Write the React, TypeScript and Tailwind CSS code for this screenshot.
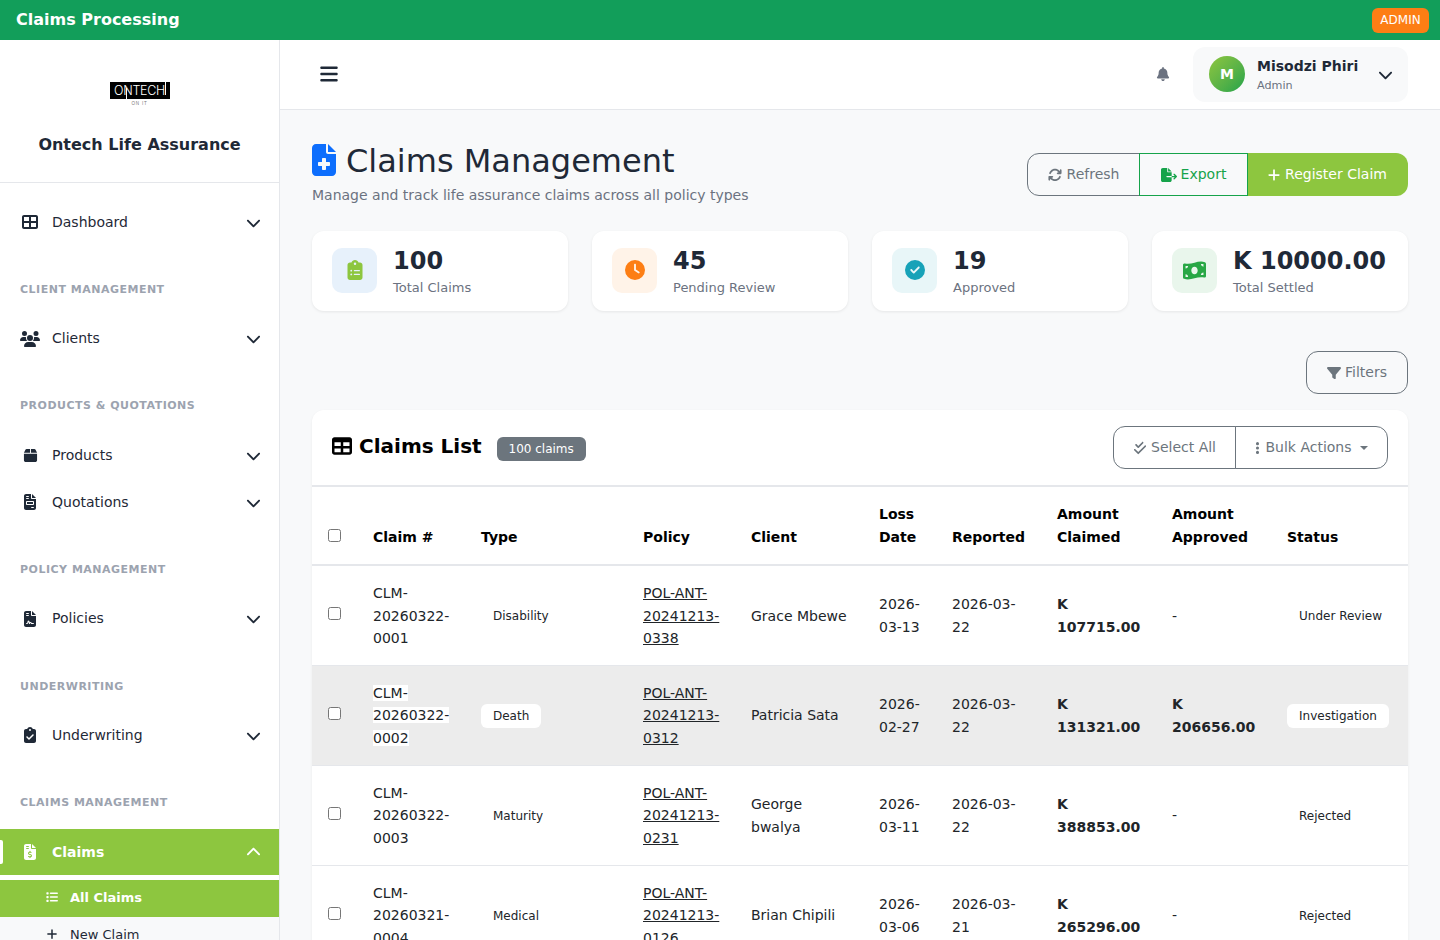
import React from 'react';
import {
  FaArrowsRotate, FaBars, FaBell, FaBox, FaCheckDouble, FaChevronDown, FaChevronUp, FaCircleCheck,
  FaClipboardCheck, FaClipboardList, FaClock, FaEllipsisVertical, FaFileContract, FaFileExport,
  FaFileInvoice, FaFileInvoiceDollar, FaFileMedical, FaFilter, FaList, FaMoneyBillWave, FaPlus,
  FaTable, FaTableCellsLarge, FaUsers,
} from 'react-icons/fa6';

const NavItem = ({ icon, label }: { icon: React.ReactNode; label: string }) => (
  <div className="flex h-[46px] items-center pl-5 pr-[18px] text-[14px] text-[#1f2937]">
    <span className="flex w-5 justify-center text-[#1f2937]">{icon}</span>
    <span className="ml-3 flex-1">{label}</span>
    <FaChevronDown size={15} className="text-[#1f2937]" />
  </div>
);

const SectionTitle = ({ children }: { children: React.ReactNode }) => (
  <div className="mb-[16.6px] mt-[36px] flex h-[18px] items-center px-5 text-[11px] font-bold uppercase tracking-[0.5px] text-[#9ca3af]">
    {children}
  </div>
);

const Sidebar = () => (
  <aside className="h-full w-[280px] shrink-0 border-r border-[#e5e7eb] bg-white">
    <div className="flex h-[143px] flex-col items-center border-b border-[#e5e7eb] pt-[42px]">
      <div className="relative flex h-[17px] w-[60px] items-center justify-center bg-black pt-[2px] font-['Inter'] text-[12.5px] font-light tracking-[-0.3px] text-white">
        ONTECH
        <span className="absolute left-[16px] top-[6px] h-[11px] w-px bg-white" />
        <span className="absolute left-[55px] top-0 h-[13px] w-px bg-white" />
      </div>
      <div className="mt-[2px] h-[6px] font-['Liberation_Sans'] text-[4.5px] leading-[6px] tracking-[0.8px] text-[#777777]">ON IT</div>
      <div className="mt-[26px] text-[16px] font-bold leading-[24px] text-[#1f2937]">Ontech Life Assurance</div>
    </div>
    <nav className="pt-4">
      <NavItem icon={<FaTableCellsLarge size={16} />} label="Dashboard" />
      <SectionTitle>Client Management</SectionTitle>
      <NavItem icon={<FaUsers size={20} />} label="Clients" />
      <SectionTitle>Products &amp; Quotations</SectionTitle>
      <div className="flex flex-col gap-[1px]">
        <NavItem icon={<FaBox size={15} />} label="Products" />
        <NavItem icon={<FaFileInvoice size={16} />} label="Quotations" />
      </div>
      <SectionTitle>Policy Management</SectionTitle>
      <NavItem icon={<FaFileContract size={16} />} label="Policies" />
      <SectionTitle>Underwriting</SectionTitle>
      <NavItem icon={<FaClipboardCheck size={16} />} label="Underwriting" />
      <SectionTitle>Claims Management</SectionTitle>
      <div className="relative flex h-[46px] items-center bg-[#8dc63f] pl-5 pr-[18px] pt-px text-[14px] font-bold text-white">
        <span className="absolute left-0 top-[11px] h-[24px] w-[3px] rounded-r-[2px] bg-white" />
        <span className="flex w-5 justify-center"><FaFileInvoiceDollar size={16} /></span>
        <span className="ml-3 flex-1">Claims</span>
        <FaChevronUp size={15} />
      </div>
      <div className="mt-[5px] bg-[#f8f9fa]">
        <div className="flex h-[37px] items-center bg-[#8dc63f] pb-[2px] pl-[46px] text-[13px] font-bold text-white">
          <FaList size={12} />
          <span className="ml-3">All Claims</span>
        </div>
        <div className="flex h-[37px] items-center pb-[2px] pl-[46px] text-[13px] text-[#1f2937]">
          <FaPlus size={12} />
          <span className="ml-3">New Claim</span>
        </div>
      </div>
    </nav>
  </aside>
);

const Stat = ({ icon, box, value, label }: { icon: React.ReactNode; box: string; value: string; label: string }) => (
  <div className="flex h-[80px] items-center rounded-xl bg-white pl-5 shadow-[0_1px_3px_rgba(0,0,0,0.08)]">
    <div className={`mb-[2px] flex h-[45px] w-[45px] items-center justify-center rounded-[10px] ${box}`}>{icon}</div>
    <div className="ml-4 mt-[2px]">
      <div className="text-[24px] font-bold leading-[31px] text-[#1f2937]">{value}</div>
      <div className="mt-[1px] text-[13px] leading-[20px] text-[#6b7280]">{label}</div>
    </div>
  </div>
);

type Claim = {
  no: string[];
  type: string;
  policy: string[];
  client: string;
  loss: string;
  reported: string;
  claimed: string;
  approved: string;
  status: string;
};

const claims: Claim[] = [
  { no: ['CLM-', '20260322-', '0001'], type: 'Disability', policy: ['POL-ANT-', '20241213-', '0338'], client: 'Grace Mbewe', loss: '2026-03-13', reported: '2026-03-22', claimed: 'K 107715.00', approved: '-', status: 'Under Review' },
  { no: ['CLM-', '20260322-', '0002'], type: 'Death', policy: ['POL-ANT-', '20241213-', '0312'], client: 'Patricia Sata', loss: '2026-02-27', reported: '2026-03-22', claimed: 'K 131321.00', approved: 'K 206656.00', status: 'Investigation' },
  { no: ['CLM-', '20260322-', '0003'], type: 'Maturity', policy: ['POL-ANT-', '20241213-', '0231'], client: 'George bwalya', loss: '2026-03-11', reported: '2026-03-22', claimed: 'K 388853.00', approved: '-', status: 'Rejected' },
  { no: ['CLM-', '20260321-', '0004'], type: 'Medical', policy: ['POL-ANT-', '20241213-', '0126'], client: 'Brian Chipili', loss: '2026-03-06', reported: '2026-03-21', claimed: 'K 265296.00', approved: '-', status: 'Rejected' },
];

const ClaimsTable = () => (
  <table className="w-full table-fixed border-collapse text-[14px] leading-[22.5px] text-[#212529]">
    <colgroup>
      <col className="w-[49px]" />
      <col className="w-[108px]" />
      <col className="w-[162px]" />
      <col className="w-[108px]" />
      <col className="w-[128px]" />
      <col className="w-[73px]" />
      <col className="w-[105px]" />
      <col className="w-[115px]" />
      <col className="w-[115px]" />
      <col className="w-[133px]" />
    </colgroup>
    <thead>
      <tr className="h-[78px] border-b-2 border-[#e5e7eb] text-left align-bottom font-bold text-black">
        <th className="px-3 pb-4 pl-4"><input type="checkbox" className="mb-[6px] block" /></th>
        <th className="px-3 pb-4">Claim #</th>
        <th className="px-3 pb-4">Type</th>
        <th className="px-3 pb-4">Policy</th>
        <th className="px-3 pb-4">Client</th>
        <th className="px-3 pb-4">Loss Date</th>
        <th className="px-3 pb-4">Reported</th>
        <th className="px-3 pb-4">Amount Claimed</th>
        <th className="px-3 pb-4">Amount Approved</th>
        <th className="px-3 pb-4">Status</th>
      </tr>
    </thead>
    <tbody>
      {claims.map((c, i) => {
        const hover = i === 1;
        return (
          <tr key={c.no.join('')} className={`h-[100px] border-b border-[#e5e7eb] ${hover ? 'bg-[#ececec]' : ''}`}>
            <td className="px-3 pl-4 pt-[1px]"><input type="checkbox" className="mb-1 block" /></td>
            <td className="px-3 pt-[1px]">
              {c.no.map(part => (
                <div key={part}><span className={hover ? 'bg-white' : ''}>{part}</span></div>
              ))}
            </td>
            <td className="px-3 pt-[1px]">
              <span className={`inline-block rounded-md px-3 py-[3px] text-[12px] leading-[18px] ${hover ? 'bg-white' : ''}`}>{c.type}</span>
            </td>
            <td className="px-3 pt-[1px] underline">
              {c.policy.map(part => <div key={part}>{part}</div>)}
            </td>
            <td className="px-3 pt-[1px]">{c.client}</td>
            <td className="px-3 pt-[1px]">{c.loss}</td>
            <td className="px-3 pt-[1px]">{c.reported}</td>
            <td className="px-3 pt-[1px] font-bold">{c.claimed}</td>
            <td className={`px-3 pt-[1px] ${c.approved === '-' ? '' : 'font-bold'}`}>{c.approved}</td>
            <td className="px-3 pt-[1px]">
              <span className={`inline-block whitespace-nowrap rounded-md px-3 py-[3px] text-[12px] leading-[18px] ${hover ? 'bg-white' : ''}`}>{c.status}</span>
            </td>
          </tr>
        );
      })}
    </tbody>
  </table>
);

export default function App() {
  return (
    <div className="flex h-[940px] flex-col overflow-hidden bg-[#f8f9fa] font-['DejaVu_Sans']">
      <div className="flex h-10 shrink-0 items-center justify-between bg-[#129e5a] pl-4 pr-[11px]">
        <span className="text-[16px] font-bold text-white">Claims Processing</span>
        <span className="flex h-[25px] w-[57px] items-center justify-center rounded-md bg-[#fd7e14] text-[12px] text-white">ADMIN</span>
      </div>
      <div className="flex min-h-0 flex-1">
        <Sidebar />
        <div className="min-w-0 flex-1">
          <header className="flex h-[70px] items-center border-b border-[#e5e7eb] bg-white pb-px pl-[39px] pr-8">
            <FaBars size={20} className="text-[#1f2937]" />
            <div className="flex-1" />
            <FaBell size={14} className="mr-[23px] text-[#6b7280]" />
            <div className="flex h-[55px] w-[215px] items-center rounded-xl bg-[#f8f9fa] pl-4">
              <div className="flex h-9 w-9 items-center justify-center rounded-full bg-gradient-to-br from-[#8dc63f] to-[#16a34a] text-[14px] font-bold text-white">M</div>
              <div className="ml-3 mt-[2px] flex-1">
                <div className="text-[14px] font-bold leading-[20px] text-[#1f2937]">Misodzi Phiri</div>
                <div className="text-[11.2px] leading-[19px] text-[#6b7280]">Admin</div>
              </div>
              <FaChevronDown size={15} className="mr-[15px] text-[#1f2937]" />
            </div>
          </header>
          <main className="px-8 pt-[31px]">
            <div className="flex items-start justify-between">
              <div>
                <h1 className="flex items-center text-[32px] font-normal leading-[40px] text-[#1f2937]">
                  <FaFileMedical className="-mt-[2px] h-8 w-6 text-[#0d6efd]" />
                  <span className="ml-[10px]">Claims Management</span>
                </h1>
                <p className="mt-[3px] text-[14px] leading-[22px] text-[#6b7280]">Manage and track life assurance claims across all policy types</p>
              </div>
              <div className="mt-[12px] flex h-[43px] text-[14px]">
                <div className="flex w-[113px] items-center justify-center gap-[5px] rounded-l-xl border border-[#6c757d] text-[#6c757d]">
                  <FaArrowsRotate size={14} /> Refresh
                </div>
                <div className="-ml-px flex w-[109px] items-center justify-center gap-1 border border-[#16a34a] text-[#16a34a]">
                  <FaFileExport size={16} /> Export
                </div>
                <div className="flex w-[160px] items-center justify-center gap-1 rounded-r-xl bg-[#8dc63f] pr-[2px] text-white">
                  <FaPlus size={14} /> Register Claim
                </div>
              </div>
            </div>
            <div className="mt-[25px] grid grid-cols-4 gap-6">
              <Stat icon={<FaClipboardList size={20} className="text-[#8dc63f]" />} box="bg-[#e7f1fb]" value="100" label="Total Claims" />
              <Stat icon={<FaClock size={20} className="text-[#fd7e14]" />} box="bg-[#fff3e8]" value="45" label="Pending Review" />
              <Stat icon={<FaCircleCheck size={20} className="text-[#17a2b8]" />} box="bg-[#e8f6f8]" value="19" label="Approved" />
              <Stat icon={<FaMoneyBillWave size={23} className="text-[#28a745]" />} box="bg-[#e9f6ec]" value="K 10000.00" label="Total Settled" />
            </div>
            <div className="mt-10 flex justify-end">
              <div className="flex h-[43px] w-[102px] items-center justify-center gap-1 rounded-xl border border-[#6c757d] text-[14px] text-[#6c757d]">
                <FaFilter size={14} /> Filters
              </div>
            </div>
            <section className="mt-4 overflow-hidden rounded-t-xl bg-white shadow-[0_1px_3px_rgba(0,0,0,0.06)]">
              <div className="flex h-[77px] items-center justify-between border-b-2 border-[#e5e7eb] pl-5 pr-5">
                <div className="flex items-center">
                  <h2 className="-mt-1 flex items-center text-[20px] font-bold leading-[26px] text-black">
                    <FaTable size={20} />
                    <span className="ml-[7px]">Claims List</span>
                  </h2>
                  <span className="ml-[15px] mt-[3px] flex h-[24px] w-[89px] items-center justify-center rounded-md bg-[#6c757d] text-[12px] text-white">100 claims</span>
                </div>
                <div className="flex h-[43px] text-[14px] text-[#6c757d]">
                  <div className="flex w-[123px] items-center justify-center gap-1 rounded-l-xl border border-[#6c757d]">
                    <FaCheckDouble size={14} /> Select All
                  </div>
                  <div className="-ml-px flex w-[153px] items-center justify-center gap-[5px] rounded-r-xl border border-[#6c757d]">
                    <FaEllipsisVertical className="h-[14px] w-[5px]" /> Bulk Actions
                    <span className="ml-[3px] h-0 w-0 border-x-[4px] border-t-[4px] border-x-transparent border-t-[#6c757d]" />
                  </div>
                </div>
              </div>
              <ClaimsTable />
            </section>
          </main>
        </div>
      </div>
    </div>
  );
}
